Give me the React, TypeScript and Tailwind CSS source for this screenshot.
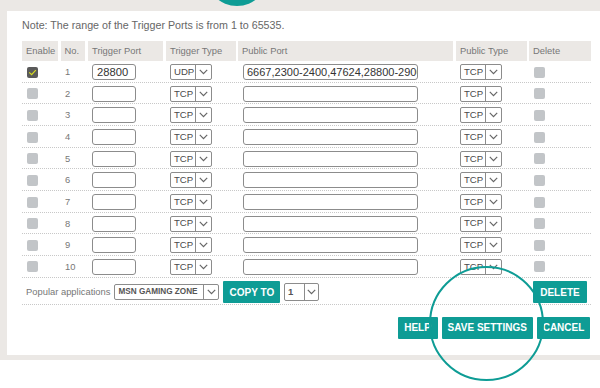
import React from "react";

const TEAL = "bg-[#0e9c95]";

function Chevron() {
  return (
    <svg width="9" height="6" viewBox="0 0 9 6" className="block">
      <path d="M0.8 0.8 L4.5 4.6 L8.2 0.8" fill="none" stroke="#666" strokeWidth="1.2" />
    </svg>
  );
}

function Select({
  text,
  textW,
  chevW,
  h,
  textCls,
}: {
  text: string;
  textW: string;
  chevW: string;
  h: string;
  textCls: string;
}) {
  return (
    <div className={`flex ${h} border border-[#8c8c8c] rounded-[2px] bg-white overflow-hidden`}>
      <div className={`${textW} flex items-center pl-[3px] border-r border-[#8c8c8c] ${textCls} whitespace-nowrap overflow-hidden`}>
        {text}
      </div>
      <div className={`${chevW} flex items-center justify-center`}>
        <Chevron />
      </div>
    </div>
  );
}

function Checkbox({ checked }: { checked?: boolean }) {
  if (checked) {
    return (
      <div className="w-[11px] h-[11px] rounded-[2px] bg-[#5a5a5a] flex items-center justify-center">
        <svg width="9" height="7" viewBox="0 0 9 7">
          <path d="M1.2 3.4 L3.6 5.6 L7.8 1.2" fill="none" stroke="#d7dc1e" strokeWidth="1.2" />
        </svg>
      </div>
    );
  }
  return <div className="w-[11px] h-[11px] rounded-[2px] bg-[#c2c5c8]" />;
}

function Btn({ label, w }: { label: string; w: string }) {
  return (
    <div
      className={`${w} h-[21.5px] ${TEAL} rounded-[1px] flex items-center justify-center text-white font-bold text-[10px] whitespace-nowrap overflow-hidden`}
    >
      {label}
    </div>
  );
}

export default function App() {
  const rows = Array.from({ length: 10 }, (_, i) => i + 1);
  const grid = "grid grid-cols-[39px_27px_78px_72px_218px_73px_62px]";
  return (
    <div className="relative w-[600px] h-[388px] overflow-hidden bg-white font-['Liberation_Sans',Arial,sans-serif]">
      <div className="bg-[#ebe8e5] pt-[11px] pl-[7px] pb-[5px]">
        <div className="bg-white h-[344px] pl-[15px] pr-[9px] pt-[6.5px]">
          <div className="h-[14px] leading-[14px] text-[10.7px] text-[#666]">
            Note: The range of the Trigger Ports is from 1 to 65535.
          </div>

          {/* header */}
          <div className="flex mt-[9.5px] h-[20px] text-[9.4px] text-[#777]">
            <div className="w-[36px] mr-[3px] bg-[#ebe8e5] flex items-center pl-[4px]">Enable</div>
            <div className="w-[24px] mr-[3px] bg-[#ebe8e5] flex items-center pl-[3.5px]">No.</div>
            <div className="w-[75px] mr-[3px] bg-[#ebe8e5] flex items-center pl-[4px]">Trigger Port</div>
            <div className="w-[70px] mr-[2px] bg-[#ebe8e5] flex items-center pl-[4px]">Trigger Type</div>
            <div className="w-[215px] mr-[3px] bg-[#ebe8e5] flex items-center pl-[4px]">Public Port</div>
            <div className="w-[71px] mr-[2px] bg-[#ebe8e5] flex items-center pl-[4px]">Public Type</div>
            <div className="w-[62px] bg-[#ebe8e5] flex items-center pl-[4px]">Delete</div>
          </div>

          {rows.map((n) => (
            <div
              key={n}
              className={`${grid} h-[21.67px] border-b border-dotted border-[#c8c8c8] items-center pt-[1.5px]`}
            >
              <div className="pl-[5px]">
                <Checkbox checked={n === 1} />
              </div>
              <div className="pl-[4px] text-[9.4px] text-[#777]">{n}</div>
              <div className="pl-[4px]">
                <div className="w-[44px] h-[16px] border border-[#8c8c8c] rounded-[3px] bg-white flex items-center pl-[4px] text-[11.2px] text-[#333] overflow-hidden">
                  {n === 1 ? "28800" : ""}
                </div>
              </div>
              <div className="pl-[4px]">
                <div className="w-[42px]">
                  <Select
                    text={n === 1 ? "UDP" : "TCP"}
                    textW="w-[25px]"
                    chevW="w-[15px]"
                    h="h-[16px]"
                    textCls="text-[9.6px] text-[#4a4a4a]"
                  />
                </div>
              </div>
              <div className="pl-[5px]">
                <div className="w-[175px] h-[16px] border border-[#8c8c8c] rounded-[3px] bg-white flex items-center pl-[3px] text-[11px] text-[#333] overflow-hidden whitespace-nowrap">
                  {n === 1 ? "6667,2300-2400,47624,28800-2900" : ""}
                </div>
              </div>
              <div className="pl-[4px]">
                <div className="w-[42px]">
                  <Select
                    text="TCP"
                    textW="w-[24.5px]"
                    chevW="w-[15.5px]"
                    h="h-[16px]"
                    textCls="text-[9.6px] text-[#4a4a4a]"
                  />
                </div>
              </div>
              <div className="pl-[5px]">
                <Checkbox />
              </div>
            </div>
          ))}

          {/* popular applications */}
          <div className="flex items-center h-[27px] border-b border-dotted border-[#c8c8c8] pt-[3px] pl-[4px]">
            <div className="text-[9.4px] text-[#777] whitespace-nowrap">Popular applications</div>
            <div className="ml-[4px] w-[105px]">
              <Select
                text="MSN GAMING ZONE"
                textW="w-[89px]"
                chevW="w-[14px]"
                h="h-[15.5px]"
                textCls="text-[8.2px] font-bold text-[#555]"
              />
            </div>
            <div className="ml-[4px]">
              <Btn label="COPY TO" w="w-[57px]" />
            </div>
            <div className="ml-[3.5px] w-[35px]">
              <Select
                text="1"
                textW="w-[20px]"
                chevW="w-[13px]"
                h="h-[17.5px]"
                textCls="text-[9.5px] font-bold text-[#555]"
              />
            </div>
            <div className="ml-auto mr-[4.3px]">
              <Btn label="DELETE" w="w-[53.5px]" />
            </div>
          </div>

          {/* bottom buttons */}
          <div className="flex justify-end gap-[4px] mt-[12.6px] mr-[1px]">
            <Btn label="HELP" w="w-[40px]" />
            <Btn label="SAVE SETTINGS" w="w-[91.5px]" />
            <Btn label="CANCEL" w="w-[53px]" />
          </div>
        </div>
      </div>

      {/* top filled circle */}
      <div className={`absolute left-[205.5px] top-[-56px] w-[62px] h-[62px] rounded-full ${TEAL}`} />
      {/* highlight ring */}
      <div className="absolute left-[428.5px] top-[266px] w-[115.5px] h-[115px] rounded-full border-2 border-[#0e9c95]" />
    </div>
  );
}
